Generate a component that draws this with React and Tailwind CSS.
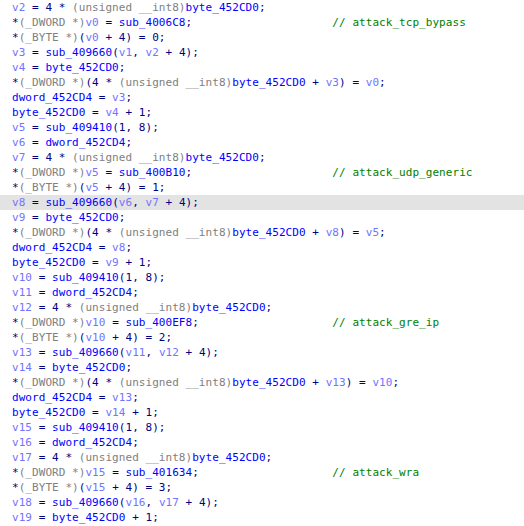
const LINES = [
  ["v2 = 4 * (unsigned __int8)byte_452CD0;"],
  ["*(_DWORD *)v0 = sub_4006C8;", "// attack_tcp_bypass"],
  ["*(_BYTE *)(v0 + 4) = 0;"],
  ["v3 = sub_409660(v1, v2 + 4);"],
  ["v4 = byte_452CD0;"],
  ["*(_DWORD *)(4 * (unsigned __int8)byte_452CD0 + v3) = v0;"],
  ["dword_452CD4 = v3;"],
  ["byte_452CD0 = v4 + 1;"],
  ["v5 = sub_409410(1, 8);"],
  ["v6 = dword_452CD4;"],
  ["v7 = 4 * (unsigned __int8)byte_452CD0;"],
  ["*(_DWORD *)v5 = sub_400B10;", "// attack_udp_generic"],
  ["*(_BYTE *)(v5 + 4) = 1;"],
  ["v8 = sub_409660(v6, v7 + 4);"],
  ["v9 = byte_452CD0;"],
  ["*(_DWORD *)(4 * (unsigned __int8)byte_452CD0 + v8) = v5;"],
  ["dword_452CD4 = v8;"],
  ["byte_452CD0 = v9 + 1;"],
  ["v10 = sub_409410(1, 8);"],
  ["v11 = dword_452CD4;"],
  ["v12 = 4 * (unsigned __int8)byte_452CD0;"],
  ["*(_DWORD *)v10 = sub_400EF8;", "// attack_gre_ip"],
  ["*(_BYTE *)(v10 + 4) = 2;"],
  ["v13 = sub_409660(v11, v12 + 4);"],
  ["v14 = byte_452CD0;"],
  ["*(_DWORD *)(4 * (unsigned __int8)byte_452CD0 + v13) = v10;"],
  ["dword_452CD4 = v13;"],
  ["byte_452CD0 = v14 + 1;"],
  ["v15 = sub_409410(1, 8);"],
  ["v16 = dword_452CD4;"],
  ["v17 = 4 * (unsigned __int8)byte_452CD0;"],
  ["*(_DWORD *)v15 = sub_401634;", "// attack_wra"],
  ["*(_BYTE *)(v15 + 4) = 3;"],
  ["v18 = sub_409660(v16, v17 + 4);"],
  ["v19 = byte_452CD0 + 1;"],
];

const HIGHLIGHT = 13;
const COMMENT_COL = 48;

const TOKEN_RE = /(\((?:unsigned __int8|_DWORD \*|_BYTE \*)\))|(\bv\d+\b)|(\b(?:sub|byte|dword)_[0-9A-F]+\b)/g;

const COLORS = {
  cast: "text-[#808080]",
  local: "text-[#7373ff]",
  global: "text-[#0000ff]",
  plain: "text-[#000080]",
};

function tokenize(code) {
  const out = [];
  let last = 0;
  for (const m of code.matchAll(TOKEN_RE)) {
    if (m.index > last) out.push(["plain", code.slice(last, m.index)]);
    const kind = m[1] ? "cast" : m[2] ? "local" : "global";
    out.push([kind, m[0]]);
    last = m.index + m[0].length;
  }
  if (last < code.length) out.push(["plain", code.slice(last)]);
  return out;
}

function CodeLine({ code, comment, active }) {
  return (
    <div className={`h-[15px] pl-[12px] whitespace-pre ${active ? "bg-[#e3e3e3]" : ""}`}>
      {tokenize(code).map(([kind, text], i) => (
        <span key={i} className={COLORS[kind]}>
          {text}
        </span>
      ))}
      {comment ? (
        <>
          <span>{" ".repeat(Math.max(1, COMMENT_COL - code.length))}</span>
          <span className="text-[#008000]">{comment}</span>
        </>
      ) : null}
    </div>
  );
}

export default function App() {
  return (
    <div className="h-[526px] w-[524px] overflow-hidden bg-white">
      <div className="font-['DejaVu_Sans_Mono',monospace] text-[11px] leading-[15px] tracking-[0.05px]">
        {LINES.map(([code, comment], i) => (
          <CodeLine key={i} code={code} comment={comment} active={i === HIGHLIGHT} />
        ))}
      </div>
    </div>
  );
}
